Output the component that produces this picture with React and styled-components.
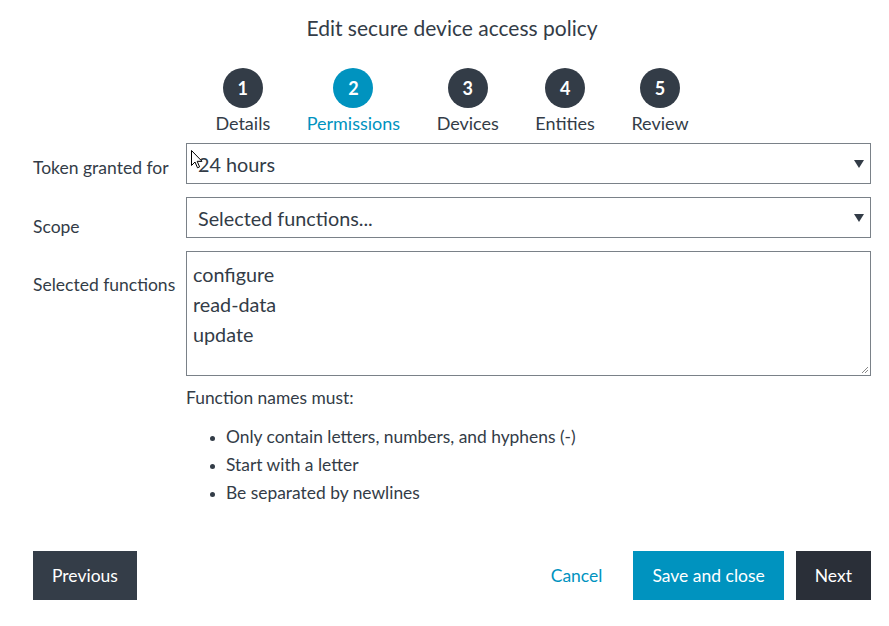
import React from "react"
import styled, { createGlobalStyle } from "styled-components"

const GlobalStyle = createGlobalStyle`
  html, body {
    margin: 0;
    background: #fff;
    font-family: Lato, "Open Sans", sans-serif;
    color: #333c47;
  }
`

const StyledPage = styled.div`
  width: 889px;
  height: 626px;
  box-sizing: border-box;
  padding: 14px 18px 0 33px;
  position: relative;
  overflow: hidden;
`

const Title = styled.h1`
  margin: 0;
  text-align: center;
  font-size: 21px;
  font-weight: 400;
  line-height: 28px;
  color: #333c47;
`

const Steps = styled.ol`
  list-style: none;
  margin: 26px 0 0;
  padding: 0;
  display: flex;
  justify-content: center;
  gap: 36.5px;
`

const Step = styled.li`
  display: flex;
  flex-direction: column;
  align-items: center;
  color: ${({ active }) => (active ? "#0093bf" : "#333c47")};
  font-size: 18px;
  line-height: 20px;
`

const Circle = styled.span`
  width: 40px;
  height: 40px;
  border-radius: 50%;
  background: ${({ active }) => (active ? "#0093bf" : "#333c47")};
  color: #fff;
  display: flex;
  align-items: center;
  justify-content: center;
  font-size: 18px;
  font-weight: 700;
  margin-bottom: 5px;
`

const Form = styled.div`
  margin-top: 10px;
  display: flex;
  flex-direction: column;
  gap: 13px;
`

const Row = styled.div`
  display: grid;
  grid-template-columns: 153px 1fr;
`

const Label = styled.label`
  font-size: 17.5px;
  line-height: 20px;
  padding-top: ${({ offset }) => offset}px;
`

const SelectBox = styled.div`
  position: relative;
  height: 41px;
  box-sizing: border-box;
  border: 1px solid #7a8188;
  display: flex;
  align-items: center;
  padding: 0 30px 0 11px;
  font-size: 19.8px;
  color: #333c47;
`

const Caret = styled.span`
  position: absolute;
  right: 6px;
  top: 16px;
  width: 0;
  height: 0;
  border-left: 5px solid transparent;
  border-right: 5px solid transparent;
  border-top: 8px solid #333c47;
`

const TextArea = styled.div`
  position: relative;
  height: 125px;
  box-sizing: border-box;
  border: 1px solid #7a8188;
  padding: 7px 6px;
  font-size: 19.8px;
  line-height: 30px;
  color: #333c47;
`

const Grip = styled.svg`
  position: absolute;
  right: 1px;
  bottom: 1px;
`

const Help = styled.div`
  margin-left: 153px;
  margin-top: 10px;
  font-size: 17.4px;
`

const HelpTitle = styled.p`
  margin: 0;
  line-height: 24px;
`

const Rules = styled.ul`
  margin: 13px 0 0;
  padding-left: 40px;
  line-height: 28px;
  li::marker {
    font-size: 14px;
  }
`

const Footer = styled.div`
  margin-top: 44px;
  display: flex;
  align-items: center;
`

const Button = styled.button`
  height: 49px;
  border: none;
  padding: 0 ${({ pad }) => pad}px;
  font-family: Lato, "Open Sans", sans-serif;
  font-size: 17.5px;
  color: #fff;
  background: ${({ tone }) =>
    tone === "primary" ? "#0093bf" : tone === "dark" ? "#2a2f38" : "#343d48"};
  margin-left: ${({ space }) => space || 0}px;
`

const LinkButton = styled.button`
  border: none;
  background: none;
  font-family: Lato, "Open Sans", sans-serif;
  font-size: 17.5px;
  color: #0093bf;
  margin-left: auto;
  margin-right: 25px;
`

const Cursor = styled.svg`
  position: absolute;
  left: 191px;
  top: 150px;
`

const steps = ["Details", "Permissions", "Devices", "Entities", "Review"]

const App = () => {
  return (
    <StyledPage>
      <GlobalStyle />
      <Title>Edit secure device access policy</Title>
      <Steps>
        {steps.map((name, i) => (
          <Step key={name} active={i === 1}>
            <Circle active={i === 1}>{i + 1}</Circle>
            {name}
          </Step>
        ))}
      </Steps>
      <Form>
        <Row>
          <Label offset={15}>Token granted for</Label>
          <SelectBox>
            24 hours
            <Caret />
          </SelectBox>
        </Row>
        <Row>
          <Label offset={20}>Scope</Label>
          <SelectBox>
            Selected functions...
            <Caret />
          </SelectBox>
        </Row>
        <Row>
          <Label offset={24}>Selected functions</Label>
          <TextArea>
            configure
            <br />
            read-data
            <br />
            update
            <Grip width="9" height="9" viewBox="0 0 9 9">
              <path d="M8 2 L2 8 M8 5 L5 8" stroke="#888" strokeWidth="1" />
            </Grip>
          </TextArea>
        </Row>
      </Form>
      <Help>
        <HelpTitle>Function names must:</HelpTitle>
        <Rules>
          <li>Only contain letters, numbers, and hyphens (-)</li>
          <li>Start with a letter</li>
          <li>Be separated by newlines</li>
        </Rules>
      </Help>
      <Footer>
        <Button pad={19}>Previous</Button>
        <LinkButton>Cancel</LinkButton>
        <Button tone="primary" pad={19}>Save and close</Button>
        <Button tone="dark" pad={19} space={12}>Next</Button>
      </Footer>
      <Cursor width="12" height="19" viewBox="0 0 12 19">
        <path
          d="M0.5 0.5 L0.5 15.5 L4 12 L6.5 17.8 L8.6 16.9 L6.2 11.3 L11 11.3 Z"
          fill="#fff"
          stroke="#000"
          strokeWidth="1"
        />
      </Cursor>
    </StyledPage>
  )
}

export default App
